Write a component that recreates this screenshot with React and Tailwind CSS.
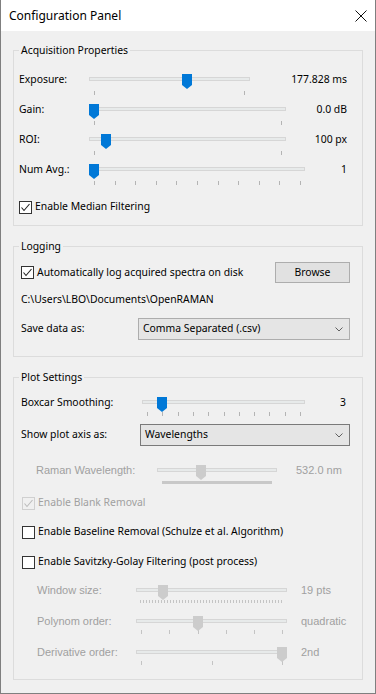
import React from "react";

function Slider({ w, thumb, ticks = [], disabled = false, tickY = 21, tickLen = 4, bar }) {
  return (
    <svg width={w} height={30} className="block shrink-0">
      <rect x={0.5} y={7.5} width={w - 1} height={3} fill="#e7eaea" stroke="#d6d6d6" />
      {ticks.map((t, i) => (
        <line key={i} x1={Math.round(t) + 0.5} x2={Math.round(t) + 0.5} y1={tickY} y2={tickY + tickLen} stroke={disabled ? "#c4c4c4" : "#b4b4b4"} />
      ))}
      {bar && <rect x={bar[0]} y={20} width={bar[1] - bar[0]} height={3} fill="#c8c8c8" />}
      <path d={`M${thumb - 5} 4h10v11l-5 4l-5 -4z`} fill={disabled ? "#cccccc" : "#0078d7"} />
    </svg>
  );
}

function Check({ checked, disabled }) {
  return (
    <svg width={13} height={13} className="block shrink-0">
      <rect x={0.5} y={0.5} width={12} height={12} fill={disabled ? "#f0f0f0" : "#ffffff"} stroke={disabled ? "#d0d0d0" : "#333333"} />
      {checked && <path d="M2.5 6.5 L5 9.5 L10.5 3" fill="none" stroke={disabled ? "#bcbcbc" : "#222222"} strokeWidth={1.1} />}
    </svg>
  );
}

function Chevron() {
  return (
    <svg width={8} height={5} className="block shrink-0">
      <path d="M0.5 0.5 L4 4 L7.5 0.5" fill="none" stroke="#606060" />
    </svg>
  );
}

function Group({ title, className, children }) {
  return (
    <div className={`relative border border-[#dcdcdc] flex flex-col ${className}`}>
      <span className="absolute left-[5px] top-[-8px] px-[2px] bg-[#f0f0f0] leading-[14px]">{title}</span>
      {children}
    </div>
  );
}

function range(a, b, n) {
  const out = [];
  for (let i = 0; i < n; i++) out.push(a + ((b - a) * i) / (n - 1));
  return out;
}

function AcqRow({ label, w, thumb, ticks, value }) {
  return (
    <div className="flex h-[30px]">
      <div className="w-[75px] pl-[5px] leading-[18px] shrink-0">{label}</div>
      <Slider w={w} thumb={thumb} ticks={ticks} />
      <div className="flex-1 text-right pr-[15px] leading-[18px]">{value}</div>
    </div>
  );
}

function DisRow({ label, thumb, ticks, value, tickY, tickLen }) {
  return (
    <div className="flex h-[31px]">
      <div className="w-[122px] pl-[23px] leading-[18px] shrink-0 text-[#a0a0a0] font-['Liberation_Sans',Arial,sans-serif] text-[11px]">{label}</div>
      <Slider w={151} thumb={thumb} ticks={ticks} disabled tickY={tickY} tickLen={tickLen} />
      <div className="ml-[14px] leading-[18px] text-[#a0a0a0] font-['Liberation_Sans',Arial,sans-serif] text-[11px]">{value}</div>
    </div>
  );
}

export default function App() {
  const dense = [];
  for (let x = 4; x <= 146; x += 3) dense.push(x);
  return (
    <div className="w-[376px] h-[694px] bg-[#f0f0f0] border-x border-b border-[#7f7f7f] flex flex-col text-[10.4px] text-black font-['Noto_Sans',sans-serif] overflow-hidden">
      <div className="h-[31px] bg-white flex items-center justify-between pl-[8px] pr-[8px] shrink-0">
        <span className="text-[12px]">Configuration Panel</span>
        <svg width={12} height={12} className="block">
          <path d="M0.5 0.5 L11.5 11.5 M11.5 0.5 L0.5 11.5" stroke="#111" strokeWidth={1} />
        </svg>
      </div>
      <div className="px-[12px] flex flex-col">
        <Group title="Acquisition Properties" className="mt-[19px] h-[176px] pt-[19px] shrink-0">
          <AcqRow label="Exposure:" w={161} thumb={98} ticks={[5, 155]} value="177.828 ms" />
          <AcqRow label="Gain:" w={197} thumb={5} ticks={[5, 192]} value="0.0 dB" />
          <AcqRow label="ROI:" w={197} thumb={17} ticks={[5, 192]} value="100 px" />
          <AcqRow label="Num Avg.:" w={216} thumb={5} ticks={range(5, 211, 11)} value="1" />
          <div className="mt-[9px] h-[16px] flex items-center pl-[5px] gap-[3px]">
            <Check checked />
            <span>Enable Median Filtering</span>
          </div>
        </Group>

        <Group title="Logging" className="mt-[20px] h-[111px] pt-[15px] pl-[7px] pr-[12px] shrink-0">
          <div className="flex items-center justify-between h-[21px]">
            <div className="flex items-center gap-[3px]">
              <Check checked />
              <span>Automatically log acquired spectra on disk</span>
            </div>
            <div className="w-[75px] h-[21px] bg-[#e1e1e1] border border-[#adadad] flex items-center justify-center">Browse</div>
          </div>
          <div className="mt-[9px] leading-[14px]">C:\Users\LBO\Documents\OpenRAMAN</div>
          <div className="mt-[12px] flex items-center h-[22px]">
            <div className="w-[117px] shrink-0">Save data as:</div>
            <div className="flex-1 h-[22px] bg-[#e5e5e5] border border-[#adadad] flex items-center justify-between pl-[4px] pr-[6px]">
              <span>Comma Separated (.csv)</span>
              <Chevron />
            </div>
          </div>
        </Group>

        <Group title="Plot Settings" className="mt-[20px] h-[303px] pt-[15px] shrink-0">
          <div className="flex h-[30px]">
            <div className="w-[128px] pl-[7px] leading-[18px] shrink-0">Boxcar Smoothing:</div>
            <Slider w={163} thumb={20} ticks={range(5, 158, 11)} tickY={19} />
            <div className="flex-1 text-right pr-[16px] leading-[18px]">3</div>
          </div>
          <div className="mt-[1px] flex items-center h-[22px] pl-[7px] pr-[12px]">
            <div className="w-[119px] shrink-0">Show plot axis as:</div>
            <div className="flex-1 h-[22px] bg-[#e5e5e5] border border-[#7a7a7a] flex items-center justify-between pl-[4px] pr-[6px]">
              <span>Wavelengths</span>
              <Chevron />
            </div>
          </div>
          <div className="mt-[15px] flex h-[30px]">
            <div className="w-[143px] pl-[22px] leading-[18px] shrink-0 text-[#a0a0a0] font-['Liberation_Sans',Arial,sans-serif] text-[11px]">Raman Wavelength:</div>
            <Slider w={120} thumb={44} disabled bar={[5, 115]} />
            <div className="ml-[19px] leading-[18px] text-[#a0a0a0] font-['Liberation_Sans',Arial,sans-serif] text-[11px]">532.0 nm</div>
          </div>
          <div className="mt-[4px] h-[16px] flex items-center pl-[8px] gap-[3px]">
            <Check checked disabled />
            <span className="text-[#a0a0a0]">Enable Blank Removal</span>
          </div>
          <div className="mt-[13px] h-[16px] flex items-center pl-[8px] gap-[3px]">
            <Check />
            <span>Enable Baseline Removal (Schulze et al. Algorithm)</span>
          </div>
          <div className="mt-[14px] h-[16px] flex items-center pl-[8px] gap-[3px]">
            <Check />
            <span>Enable Savitzky-Golay Filtering (post process)</span>
          </div>
          <div className="mt-[11px]">
            <DisRow label="Window size:" thumb={27} ticks={dense} value="19 pts" tickY={19} tickLen={3} />
            <DisRow label="Polynom order:" thumb={62} ticks={[5, 33, 62, 90, 118, 146]} value="quadratic" tickY={18} tickLen={4} />
            <DisRow label="Derivative order:" thumb={146} ticks={[5, 76, 146]} value="2nd" tickY={18} tickLen={4} />
          </div>
        </Group>
      </div>
    </div>
  );
}
